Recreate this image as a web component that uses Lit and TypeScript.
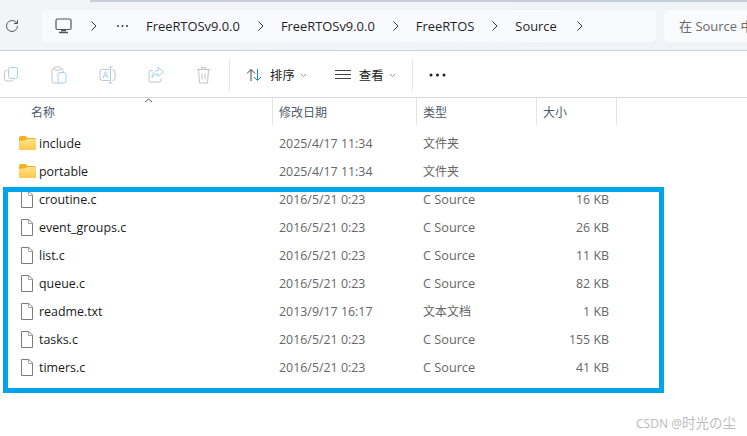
import { LitElement, html, css, svg } from "lit";
import { customElement } from "lit/decorators.js";

type Row = { name: string; date: string; type: string; size: string; folder?: boolean };
const rows: Row[] = [
  { name: "include", date: "2025/4/17 11:34", type: "文件夹", size: "", folder: true },
  { name: "portable", date: "2025/4/17 11:34", type: "文件夹", size: "", folder: true },
  { name: "croutine.c", date: "2016/5/21 0:23", type: "C Source", size: "16 KB" },
  { name: "event_groups.c", date: "2016/5/21 0:23", type: "C Source", size: "26 KB" },
  { name: "list.c", date: "2016/5/21 0:23", type: "C Source", size: "11 KB" },
  { name: "queue.c", date: "2016/5/21 0:23", type: "C Source", size: "82 KB" },
  { name: "readme.txt", date: "2013/9/17 16:17", type: "文本文档", size: "1 KB" },
  { name: "tasks.c", date: "2016/5/21 0:23", type: "C Source", size: "155 KB" },
  { name: "timers.c", date: "2016/5/21 0:23", type: "C Source", size: "41 KB" },
];

const chevron = html`<svg class="chev" width="8" height="12" viewBox="0 0 8 12"><path d="M2.500 1.500 7 6l-4.500 4.500" fill="none" stroke="#333" stroke-width="1"/></svg>`;
const folderIcon = html`<svg width="17" height="14" viewBox="0 0 17 14"><defs><linearGradient id="fg" x1="0" y1="0" x2="0" y2="1"><stop offset="0" stop-color="#ffe28a"/><stop offset="1" stop-color="#fdc94a"/></linearGradient></defs><path d="M0 2a2 2 0 0 1 2-2h4.500l2 2H15a2 2 0 0 1 2 2v8a2 2 0 0 1-2 2H2a2 2 0 0 1-2-2z" fill="#f2b01e"/><path d="M0 5l6-.8L8.500 3H15a2 2 0 0 1 2 2v7a2 2 0 0 1-2 2H2a2 2 0 0 1-2-2z" fill="url(#fg)"/></svg>`;
const fileIcon = html`<svg width="14" height="17" viewBox="0 0 14 17"><path d="M1.500.500h7.500l3.500 3.500v12.500h-11z" fill="#fff" stroke="#7c7c7c"/><path d="M8.500.500v4h4" fill="none" stroke="#a5a5a5"/></svg>`;

const icon = (w: number, body: unknown) => html`<svg width="${w}" height="18" viewBox="0 0 ${w} 18" fill="none">${body}</svg>`;
const down = html`<svg class="dn" width="7" height="5" viewBox="0 0 7 5"><path d="M1 1l2.500 2.500L6 1" fill="none" stroke="#999"/></svg>`;

@customElement("app-root")
export class AppRoot extends LitElement {
  static styles = css`
    :host { display: block; width: 747px; height: 436px; position: relative; overflow: hidden; background: #fff;
      font-family: "Open Sans", "Noto Sans", "Noto Sans CJK SC", sans-serif; color: #1c1c1c; }
    .top { height: 50px; background: linear-gradient(90deg, #f3f4f8, #eff4f9); border-bottom: 1px solid #c6d2e0; display: flex; align-items: center; position: relative; }
    .tabline { height: 2px; background: #c9cedb; position: absolute; top: 0; left: 90px; right: 0; }
    .refresh { width: 42px; flex: none; display: flex; padding-left: 5px; box-sizing: border-box; margin-top: 2px; }
    .crumbs { width: 614px; height: 32px; margin-top: 2px; box-sizing: border-box; background: #f9fafd; border-radius: 5px; display: flex; align-items: center; padding-left: 13px; flex: none; font-size: 12.900px; color: #1f1f1f; }
    .crumbs span { white-space: nowrap; }
    .crumbs svg { flex: none; }
    .g16 { width: 16px; flex: none; }
    .g17 { width: 17px; flex: none; }
    .search { margin-left: 8px; flex: 1; height: 32px; margin-top: 1px; background: #f9fbfd; border-radius: 5px 0 0 5px; display: flex; align-items: center; padding-left: 15px; font-size: 13px; color: #6a6a6a; white-space: nowrap; overflow: hidden; }
    .tools { height: 46px; box-sizing: content-box; border-bottom: 1px solid #d4d8dc; display: flex; align-items: center; font-size: 12.400px; padding-top: 0; }
    .tools > * { position: relative; top: 1px; }
    .group { display: flex; align-items: center; padding-left: 3px; gap: 32px; }
    .sep { width: 1px; height: 32px; background: #e6e6e6; flex: none; }
    .dn { margin-left: 5px; flex: none; }
    .s18 { width: 18px; flex: none; }
    .s16 { width: 16px; flex: none; }
    .s7 { width: 7px; flex: none; }
    .s8 { width: 8px; flex: none; }
    .s28 { width: 28px; flex: none; }
    .head, .row { display: grid; grid-template-columns: 273px 144px 120px 80px; }
    .head { height: 27px; font-size: 12px; color: #4f5b6a; position: relative; }
    .head > div { padding-left: 6px; display: flex; align-items: center; border-right: 1px solid #e4e4e4; box-sizing: border-box; height: 27px; }
    .head > div:first-child { padding-left: 31px; }
    .caret { position: absolute; left: 144px; top: 0; }
    .list { padding-top: 4px; }
    .row { height: 28px; align-items: center; font-size: 12.400px; color: #666; white-space: nowrap; }
    .name { display: flex; align-items: center; color: #1a1a1a; padding-left: 19px; box-sizing: border-box; font-size: 12.400px; }
    .ico { width: 20px; display: flex; flex: none; }
    .file { padding-left: 1px; display: flex; }
    .date, .type { padding-left: 6px; }
    .type { font-size: 12.700px; }
    .type.cjk { font-size: 12px; }
    .size { text-align: right; padding-right: 8px; box-sizing: border-box; }
    .mark { position: absolute; left: 3px; top: 187px; width: 661px; height: 206px; box-sizing: border-box; border: 5px solid #00a4e8; pointer-events: none; }
    .wm { position: absolute; left: 636px; top: 415px; font-size: 13.500px; color: #bdbdbd; white-space: nowrap; line-height: 16px; font-family: "Noto Sans", "Noto Sans CJK SC", sans-serif; }
    .wm span { font-size: 12px; }
  `;

  render() {
    return html`
      <div class="top">
        <div class="tabline"></div>
        <div class="refresh"><svg width="14" height="14" viewBox="0 0 14 14" fill="none"><path d="M12.500 7a5.500 5.500 0 1 1-1.600-3.900L12.500 4.500" stroke="#555" stroke-width="1"/><path d="M12.500 1v3.500H9" stroke="#555" stroke-width="1"/></svg></div>
        <div class="crumbs">
          <svg width="17" height="16" viewBox="0 0 17 16" fill="none"><rect x="1" y="1" width="15" height="10.500" rx="1.500" stroke="#555" stroke-width="1.200"/><path d="M4 14.500h9M6 12.500h5" stroke="#555" stroke-width="1.600"/></svg>
          <span class="g17"></span>
          ${chevron}
          <span style="width:19px;flex:none"></span>
          <svg width="13" height="4" viewBox="0 0 13 4"><circle cx="2" cy="2" r="1" fill="#333"/><circle cx="6.500" cy="2" r="1" fill="#333"/><circle cx="11" cy="2" r="1" fill="#333"/></svg>
          <span class="g17"></span>
          <span>FreeRTOSv9.0.0</span>
          <span class="g16"></span>${chevron}<span class="g17"></span>
          <span>FreeRTOSv9.0.0</span>
          <span class="g16"></span>${chevron}<span class="g17"></span>
          <span>FreeRTOS</span>
          <span class="g16"></span>${chevron}<span class="g17"></span>
          <span>Source</span>
          <span style="width:18px;flex:none"></span>${chevron}
        </div>
        <div class="search">在 Source 中搜索</div>
      </div>
      <div class="tools">
        <div class="group">
          ${icon(16, svg`<path d="M4.500 4.500H3.500A2 2 0 0 0 1.500 6.500v6A2.500 2.500 0 0 0 4 15h4.500a2 2 0 0 0 1.800-1.500" stroke="#c4c4c4"/><rect x="5.500" y="1.500" width="9" height="11" rx="2" stroke="#a6cfef" fill="#fff"/>`)}
          ${icon(16, svg`<rect x="1" y="2.500" width="11" height="14.500" rx="2" stroke="#c4c4c4"/><rect x="3.500" y="1" width="6" height="3" rx="1" stroke="#c4c4c4" fill="#fff"/><rect x="7" y="6.500" width="8" height="10.500" rx="2" stroke="#a6cfef" fill="#fff"/>`)}
          ${icon(17, svg`<rect x="1" y="3.500" width="15" height="11" rx="2.500" stroke="#c4c4c4"/><path d="M10.500 3h3v12h-3z" fill="#fff"/><path d="M11.500 1v16M9.500 1h4M9.500 17h4" stroke="#a6cfef" stroke-width="1"/><path d="M4 12l2.500-6.500L9 12M5 10h3" stroke="#a6cfef"/>`)}
          ${icon(16, svg`<path d="M5 4.500H3a2 2 0 0 0-2 2V14a2 2 0 0 0 2 2h8a2 2 0 0 0 2-2v-1.500" stroke="#c4c4c4"/><path d="M10 1.500l5.500 4.500L10 10.500V8C7 8 5 9.500 4 12c0-4 2-7 6-7.500z" stroke="#a6cfef" fill="#fff"/>`)}
          ${icon(15, svg`<path d="M1 3.500h13M5.500 3.500V1.500h4v2M2.500 3.500l1 13.500h8l1-13.500M6 7.500v6M9 7.500v6" stroke="#c4c4c4"/>`)}
        </div>
        <span class="s18"></span><div class="sep"></div><span class="s16"></span>
        <svg width="17" height="14" viewBox="0 0 17 14" fill="none"><path d="M5 13V1.500M1 5.500 5 1.500l4 4" stroke="#444"/><path d="M11.500 1v11.500M8 9l3.500 3.500L15 9" stroke="#1a8ad4"/></svg>
        <span class="s7"></span>
        <span>排序</span>
        ${down}
        <span class="s28"></span>
        <svg width="16" height="10" viewBox="0 0 16 10"><path d="M0 .500h16M0 4.500h16M0 8.500h16" stroke="#444"/></svg>
        <span class="s8"></span>
        <span>查看</span>
        ${down}
        <span class="s16"></span><div class="sep"></div><span class="s16"></span>
        <svg width="17" height="4" viewBox="0 0 17 4"><circle cx="2" cy="2" r="1.500" fill="#222"/><circle cx="8.500" cy="2" r="1.500" fill="#222"/><circle cx="15" cy="2" r="1.500" fill="#222"/></svg>
      </div>
      <div class="head">
        <div>名称</div><div>修改日期</div><div>类型</div><div>大小</div>
        <svg class="caret" width="9" height="5" viewBox="0 0 9 5"><path d="M1 4l3.500-3L8 4" fill="none" stroke="#555"/></svg>
      </div>
      <div class="list">
        ${rows.map(r => html`
          <div class="row">
            <div class="name"><span class="ico">${r.folder ? folderIcon : html`<span class="file">${fileIcon}</span>`}</span>${r.name}</div>
            <div class="date">${r.date}</div>
            <div class="type ${r.type.startsWith("C") ? "" : "cjk"}">${r.type}</div>
            <div class="size">${r.size}</div>
          </div>`)}
      </div>
      <div class="mark"></div>
      <div class="wm"><span>CSDN @</span>时光の尘</div>
    `;
  }
}
